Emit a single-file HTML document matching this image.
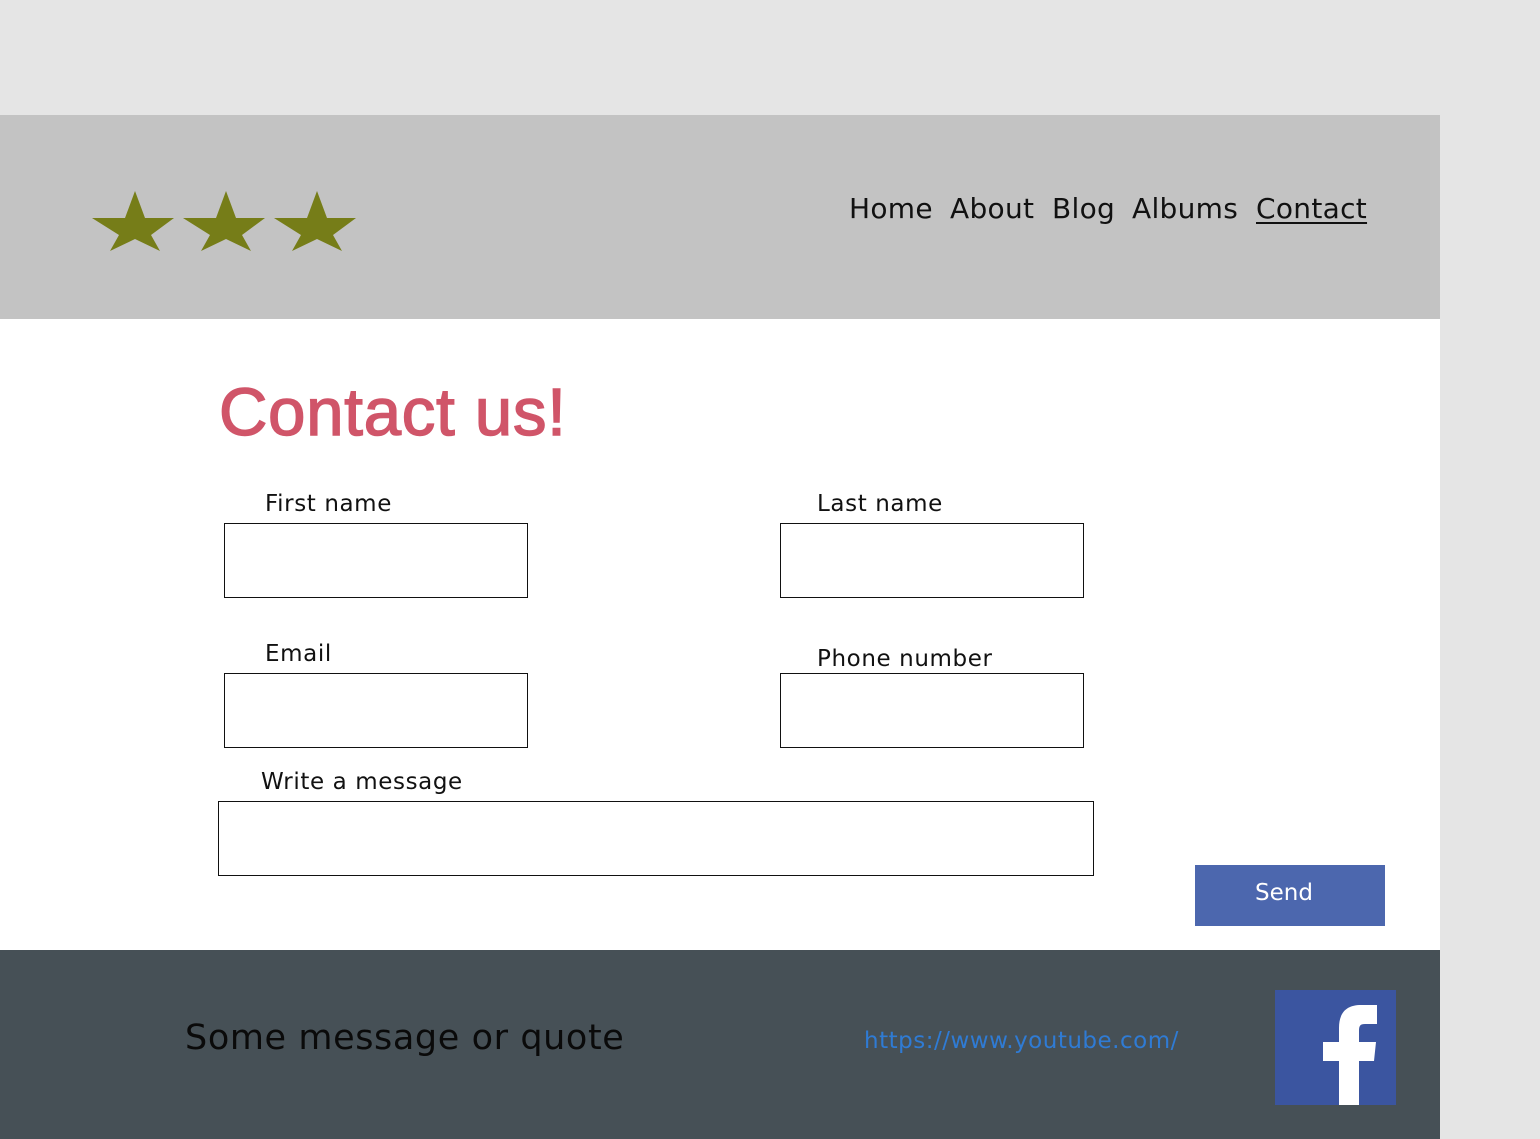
<!DOCTYPE html>
<html><head><meta charset="utf-8"><style>
body{margin:0;width:1540px;height:1139px;background:#e5e5e5;position:relative;overflow:hidden;font-family:"DejaVu Sans","Liberation Sans",sans-serif;}
.a{position:absolute;white-space:nowrap;}
.nav{top:192px;font-size:28px;color:#111;letter-spacing:0.3px}
.lbl{font-size:23px;color:#111;letter-spacing:0.6px}
.box{position:absolute;border:1px solid #111;background:#fff;box-sizing:border-box;}
</style></head><body>
<div class="a" style="left:0;top:115px;width:1440px;height:204px;background:#c3c3c3"></div>
<div class="a" style="left:0;top:319px;width:1440px;height:631px;background:#fff"></div>
<div class="a" style="left:0;top:950px;width:1440px;height:189px;background:#465056"></div>
<svg class="a" style="left:88px;top:188px" width="275" height="65" viewBox="0 0 275 65">
<g fill="#767d18">
<polygon id="s" points="47,3 57,30 86,30 63,47 72,63 47,51 22,63 31,47 4,30 37,30"/>
<use href="#s" x="91"/><use href="#s" x="182"/>
</g></svg>
<div class="a nav" style="left:849px">Home</div>
<div class="a nav" style="left:950px">About</div>
<div class="a nav" style="left:1052px">Blog</div>
<div class="a nav" style="left:1132px">Albums</div>
<div class="a nav" style="left:1256px;text-decoration:underline;text-underline-offset:4px;text-decoration-thickness:2px">Contact</div>
<div class="a" style="left:219px;top:374px;font-family:'Liberation Sans',sans-serif;font-size:67px;color:#d05569;letter-spacing:0.8px;-webkit-text-stroke:1.5px #d05569">Contact us!</div>
<div class="a lbl" style="left:265px;top:491px">First name</div>
<div class="a lbl" style="left:817px;top:491px">Last name</div>
<div class="a lbl" style="left:265px;top:641px">Email</div>
<div class="a lbl" style="left:817px;top:646px">Phone number</div>
<div class="a lbl" style="left:261px;top:769px">Write a message</div>
<div class="box" style="left:224px;top:523px;width:304px;height:75px"></div>
<div class="box" style="left:780px;top:523px;width:304px;height:75px"></div>
<div class="box" style="left:224px;top:673px;width:304px;height:75px"></div>
<div class="box" style="left:780px;top:673px;width:304px;height:75px"></div>
<div class="box" style="left:218px;top:801px;width:876px;height:75px"></div>
<div class="a" style="left:1195px;top:865px;width:190px;height:61px;background:#4c67ae;color:#fff;font-size:23px;line-height:56px;text-align:center;padding-right:12px;box-sizing:border-box">Send</div>
<div class="a" style="left:185px;top:1018px;font-size:35px;color:#0a0a0a;letter-spacing:0.6px">Some message or quote</div>
<div class="a" style="left:864px;top:1028px;font-size:23px;color:#2f7bd4;letter-spacing:0.5px">https://www.youtube.com/</div>
<svg class="a" style="left:1275px;top:990px" width="121" height="115" viewBox="0 0 121 115">
<rect width="121" height="115" fill="#3b55a0"/>
<path d="M64 115V71H48V52H64V38C64 22 72 15 86 15H102V34H90C85 34 84 36 84 41V52H101L99 71H84V115Z" fill="#fff"/>
</svg>
</body></html>
